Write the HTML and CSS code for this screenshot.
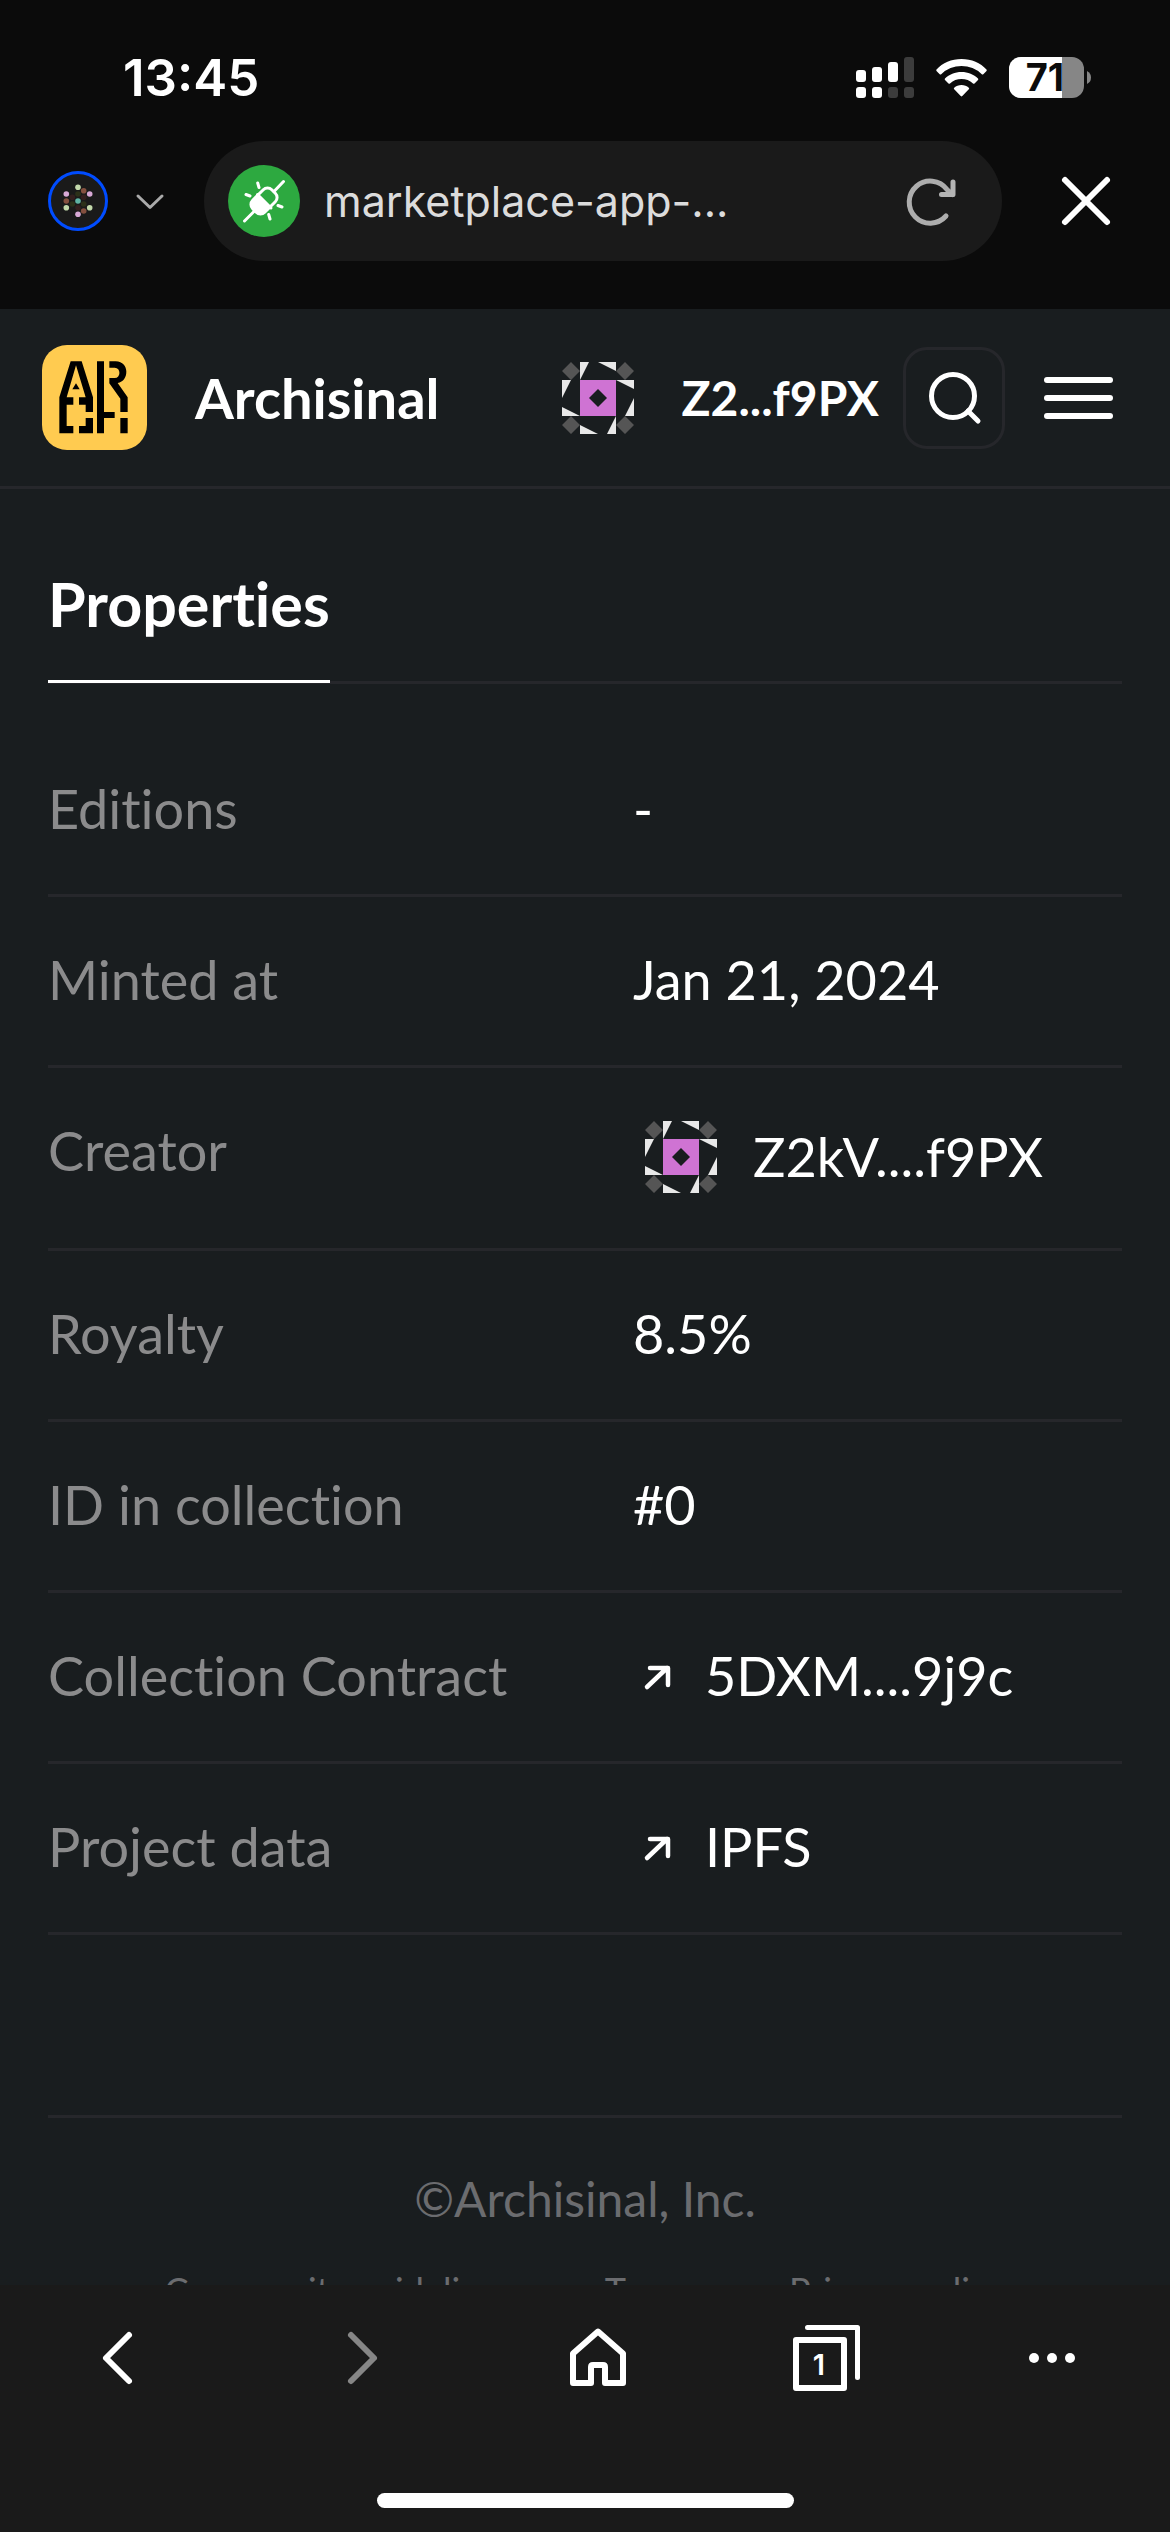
FILE: index.html
```html
<!DOCTYPE html>
<html lang="en">
<head>
<meta charset="utf-8">
<meta name="viewport" content="width=device-width, initial-scale=1">
<title>Archisinal</title>
<link rel="stylesheet" href="styles.css">
</head>
<body>
<svg class="sprite" aria-hidden="true">
  <symbol id="identicon" viewBox="0 0 72 72">
    <path fill="#cf73d3" d="M18 18H54V54H18Z"/>
    <path fill="#191d1f" d="M36 27L45 36L36 45L27 36Z"/>
    <path fill="#e8e8e8" d="M18 0H27L18 18ZM36 0H54V9ZM54 18H72V27ZM72 36V54H63ZM54 54V72H45ZM18 63V72H36ZM0 18H9L0 36ZM0 45V54H18Z"/>
    <path fill="#555" d="M9 0L18 9L9 18L0 9ZM63 0L72 9L63 18L54 9ZM9 54L18 63L9 72L0 63ZM63 54L72 63L63 72L54 63Z"/>
  </symbol>
  <symbol id="arrow" viewBox="0 0 48 48">
    <path d="M14 35L34 16M17 16H35V33" fill="none" stroke="#fff" stroke-width="4.500" stroke-linecap="round" stroke-linejoin="round"/>
  </symbol>
</svg>

<div class="chrome">
  <div class="status">
    <span class="time">13:45</span>
    <div class="indicators">
      <svg width="58" height="42" viewBox="0 0 58 42" aria-hidden="true">
        <g fill="#fff"><rect y="13" width="10" height="12" rx="3"/><rect x="16" y="10" width="10" height="15" rx="3"/><rect x="32" y="5" width="10" height="20" rx="3"/><rect y="30" width="10" height="11" rx="3"/><rect x="16" y="30" width="10" height="11" rx="3"/></g>
        <g fill="#3c3c3c"><rect x="48" width="10" height="25" rx="3"/><rect x="32" y="30" width="10" height="11" rx="3"/><rect x="48" y="30" width="10" height="11" rx="3"/></g>
      </svg>
      <svg width="51" height="42" viewBox="0 0 51 42" aria-hidden="true">
        <path fill="#fff" d="M25.500 2C35.500 2 44.500 6 50.500 12.500Q51 13.300 50.500 14L47.300 17.200Q46.500 17.800 45.800 17.200A29 29 0 0 0 5.200 17.200Q4.500 17.800 3.700 17.200L.5 14Q0 13.300 .5 12.500C6.500 6 15.500 2 25.500 2ZM25.500 15C32 15 37.800 17.500 42 21.500Q42.600 22.300 42 23L38.500 26.500Q37.700 27 37 26.500A17 17 0 0 0 14 26.500Q13.300 27 12.500 26.500L9 23Q8.400 22.300 9 21.500C13.200 17.500 19 15 25.500 15ZM25.500 28C28.300 28 30.900 29 32.800 30.700Q33.500 31.500 32.800 32.300L26.300 39Q25.500 39.800 24.700 39L18.200 32.300Q17.500 31.500 18.200 30.700C20.100 29 22.700 28 25.500 28Z"/>
      </svg>
      <svg width="82" height="42" viewBox="0 0 82 42" role="img" aria-label="Battery 71 percent">
        <rect width="75" height="41" rx="12" fill="#868686"/>
        <path fill="#fff" d="M12 0H53V41H12A12 12 0 0 1 0 29V12A12 12 0 0 1 12 0Z"/>
        <path fill="#868686" d="M78 14Q82 16 82 20.500T78 27Z"/>
        <text class="level" x="36" y="34" text-anchor="middle">71</text>
      </svg>
    </div>
  </div>

  <div class="browser">
    <button class="wallet" aria-label="Account">
      <svg width="60" height="60" viewBox="0 0 60 60">
        <circle cx="30" cy="30" r="28.500" fill="#1a1a1a" stroke="#004cff" stroke-width="3"/>
        <g fill="#c3d9ab"><circle cx="30" cy="16.300" r="2.800"/><circle cx="18.300" cy="36.700" r="2.800"/><circle cx="41.700" cy="36.700" r="2.800"/></g>
        <g fill="#84503f"><circle cx="35.700" cy="19.700" r="2.800"/><circle cx="18.300" cy="30" r="2.800"/><circle cx="35.700" cy="40" r="2.800"/></g>
        <g fill="#d8a9d6"><circle cx="41.700" cy="23" r="2.800"/><circle cx="18.300" cy="23" r="2.800"/><circle cx="30" cy="43.300" r="2.800"/></g>
        <g fill="#341f1e"><circle cx="24.300" cy="26.300" r="2.800"/><circle cx="35.700" cy="26.300" r="2.800"/><circle cx="30" cy="36.700" r="2.800"/></g>
        <g fill="#2c3019"><circle cx="30" cy="23" r="2.800"/><circle cx="24.300" cy="33" r="2.800"/><circle cx="35.700" cy="33" r="2.800"/></g>
        <circle cx="30" cy="30" r="2.800" fill="#5fb3a3"/>
      </svg>
      <svg width="36" height="36" viewBox="0 0 36 36">
        <path d="M6 13L18 24.500L30 13" fill="none" stroke="#aaa" stroke-width="3" stroke-linecap="round" stroke-linejoin="round"/>
      </svg>
    </button>
    <div class="address">
      <svg width="72" height="72" viewBox="0 0 72 72" aria-hidden="true">
        <circle cx="36" cy="36" r="36" fill="#2da940"/>
        <g fill="none" stroke="#fff" stroke-width="3" stroke-linecap="round">
          <path d="M55.500 16.500L46 26.500M16.500 56L27 45.500"/>
          <path d="M29.700 18L31 22.500M18 29.500L22 31M50 40.500L54 42M40.700 49.500L42 54"/>
          <path d="M29.500 29.500L43 43"/>
          <rect x="27.500" y="22.500" width="17" height="27" rx="6" transform="rotate(45 36 36)"/>
        </g>
        <path d="M27.500 36H44.500V43.500A6 6 0 0 1 38.500 49.500H33.500A6 6 0 0 1 27.500 43.500Z" fill="#fff" transform="rotate(45 36 36)"/>
      </svg>
      <input class="url" type="text" aria-label="Address" value="marketplace-app-...">
      <button class="reload" aria-label="Reload">
        <svg width="60" height="60" viewBox="0 0 60 60">
          <path d="M44 45A21 21 0 1 1 45 18.500L50.500 23.500" fill="none" stroke="#adadad" stroke-width="5" stroke-linecap="round"/>
          <path d="M39.500 23.500H51V11" fill="none" stroke="#b4b4b4" stroke-width="5" stroke-linecap="round" stroke-linejoin="round"/>
        </svg>
      </button>
    </div>
    <button class="close" aria-label="Close">
      <svg width="72" height="72" viewBox="0 0 72 72">
        <path d="M15 15L57 57M57 15L15 57" stroke="#fff" stroke-width="6" stroke-linecap="round"/>
      </svg>
    </button>
  </div>
</div>

<header class="site-header">
  <a class="brand" href="#">
    <svg width="105" height="105" viewBox="36 45 315 315" aria-hidden="true">
      <rect x="36" y="45" width="315" height="315" rx="75" fill="#ffcb50"/>
      <path d="M88 202L122 94H155L189 202H167L138 106L110 202ZM127 178L138 160L149 178ZM88 202H110V310H88ZM110 202H130V224H110ZM147 202H189V246H167V224H147ZM110 288H130V310H110ZM167 264H189V310H147V288H167ZM201 94H222V246H254V264H222V310H201ZM271 264H293V310H271ZM238 94H257C300 94 298 155 263 159L293 202V246H271V206L238 160V144H254C273 144 273 113 254 113H238Z"/>
    </svg>
    <span>Archisinal</span>
  </a>
  <a class="account" href="#">
    <svg width="72" height="72" aria-hidden="true"><use href="#identicon"/></svg>
    <span>Z2...f9PX</span>
  </a>
  <button class="search" aria-label="Search">
    <svg width="60" height="60" viewBox="0 0 60 60">
      <circle cx="29" cy="28" r="21.500" fill="none" stroke="#fff" stroke-width="5"/>
      <path d="M44 43L54 53" stroke="#fff" stroke-width="5" stroke-linecap="round"/>
    </svg>
  </button>
  <button class="menu" aria-label="Menu">
    <span></span><span></span><span></span>
  </button>
</header>

<main class="page">
  <div class="tabs">
    <h2 class="tab">Properties</h2>
  </div>
  <table class="properties">
    <tbody>
      <tr><th scope="row">Editions</th><td>-</td></tr>
      <tr><th scope="row">Minted at</th><td>Jan 21, 2024</td></tr>
      <tr><th scope="row">Creator</th><td><a class="creator" href="#"><svg width="72" height="72" aria-hidden="true"><use href="#identicon"/></svg>Z2kV....f9PX</a></td></tr>
      <tr><th scope="row">Royalty</th><td>8.5%</td></tr>
      <tr><th scope="row">ID in collection</th><td>#0</td></tr>
      <tr><th scope="row">Collection Contract</th><td><a class="external" href="#"><svg width="48" height="48" aria-hidden="true"><use href="#arrow"/></svg>5DXM....9j9c</a></td></tr>
      <tr><th scope="row">Project data</th><td><a class="external" href="#"><svg width="48" height="48" aria-hidden="true"><use href="#arrow"/></svg>IPFS</a></td></tr>
    </tbody>
  </table>
  <footer class="footer">
    <p>©Archisinal, Inc.</p>
    <div class="links">
      <a href="#">Community guidelines</a>
      <a href="#">Terms</a>
      <a href="#">Privacy policy</a>
    </div>
  </footer>
</main>

<nav class="toolbar" aria-label="Browser">
  <div class="tools">
    <button aria-label="Back"><svg width="96" height="96" viewBox="0 0 96 96"><path d="M59 25L36 48L59 71" fill="none" stroke="#fff" stroke-width="6" stroke-linecap="round" stroke-linejoin="round"/></svg></button>
    <button aria-label="Forward"><svg width="96" height="96" viewBox="0 0 96 96"><path d="M47 25L70 48L47 71" fill="none" stroke="#868686" stroke-width="6" stroke-linecap="round" stroke-linejoin="round"/></svg></button>
    <button aria-label="Home"><svg width="96" height="96" viewBox="0 0 96 96"><path d="M61 21.500L36 43.500V73H54V57Q54 55 56 55H66Q68 55 68 57V73H86V43.500Z" fill="none" stroke="#fff" stroke-width="6" stroke-linejoin="round"/></svg></button>
    <button aria-label="Tabs"><svg width="96" height="96" viewBox="0 0 96 96"><g fill="none" stroke="#fff" stroke-linejoin="round"><rect x="25" y="30" width="48" height="48" stroke-width="6"/><path d="M36.500 17.500H86.500V67.500" stroke-width="5" stroke-linecap="round"/></g><text class="tab-count" x="48" y="65" text-anchor="middle">1</text></svg></button>
    <button aria-label="More"><svg width="96" height="96" viewBox="0 0 96 96" fill="#fff"><circle cx="30" cy="48" r="5"/><circle cx="48" cy="48" r="5"/><circle cx="66" cy="48" r="5"/></svg></button>
  </div>
  <div class="home-bar"></div>
</nav>
</body>
</html>
```
FILE: styles.css
```css
* {
  box-sizing: border-box;
}

body {
  margin: 0;
  height: 100vh;
  display: flex;
  flex-direction: column;
  background: #191d1f;
  color: #fff;
  font-family: Lato, "Open Sans", sans-serif;
  font-variant-ligatures: none;
}

.sprite {
  display: none;
}

svg {
  display: block;
  flex: none;
}

button {
  padding: 0;
  border: 0;
  background: none;
  color: inherit;
  font: inherit;
}

a {
  color: inherit;
  text-decoration: none;
}

/* Phone status and browser bar */
.chrome {
  background: #0b0b0b;
  padding-bottom: 48px;
}

.status {
  display: flex;
  align-items: center;
  justify-content: space-between;
  padding: 51px 79px 36px 123px;
}

.time {
  font: 600 51px/54px Inter, sans-serif;
}

.indicators {
  display: flex;
  gap: 22px;
}

.level {
  font: 700 38px Inter, sans-serif;
  fill: #0b0b0b;
}

.browser {
  display: flex;
  align-items: center;
  gap: 36px;
  padding: 0 48px;
}

.wallet {
  display: flex;
  align-items: center;
  gap: 24px;
}

.address {
  flex: 1;
  min-width: 0;
  display: flex;
  align-items: center;
  gap: 24px;
  padding: 24px 40px 24px 24px;
  border-radius: 60px;
  background: #1a1a1a;
}

.url {
  flex: 1;
  min-width: 0;
  padding: 0;
  border: 0;
  outline: 0;
  background: none;
  color: #dcdcdc;
  font: 400 43px/60px Inter, sans-serif;
}

.close {
  margin-left: 12px;
}

/* Site header */
.site-header {
  display: flex;
  align-items: center;
  padding: 36px 57px 36px 42px;
  border-bottom: 3px solid #26272b;
}

.brand {
  display: flex;
  align-items: center;
  gap: 48px;
  font-size: 56px;
  font-weight: 700;
}

.account {
  display: flex;
  align-items: center;
  gap: 48px;
  margin-left: auto;
  font-size: 48px;
  font-weight: 700;
}

.search {
  display: grid;
  place-items: center;
  width: 102px;
  height: 102px;
  margin: 0 39px 0 24px;
  border: 3px solid #26272b;
  border-radius: 24px;
}

.menu {
  display: grid;
  gap: 12px;
  width: 69px;
}

.menu span {
  height: 6px;
  border-radius: 3px;
  background: #fff;
}

/* Page content */
.page {
  flex: 1;
  min-height: 0;
  overflow-y: auto;
  scrollbar-width: none;
  padding: 72px 48px 0;
}

.tabs {
  display: flex;
  border-bottom: 3px solid #26272b;
}

.tab {
  margin: 0 0 -2px;
  padding: 3px 0 36px;
  border-bottom: 3px solid #fff;
  font-size: 61px;
  line-height: 80px;
}

.properties {
  width: 100%;
  margin-top: 42px;
  border-collapse: separate;
  border-spacing: 0;
  table-layout: fixed;
  font-size: 54px;
  line-height: 81px;
}

.properties th,
.properties td {
  padding: 42px 0 45px;
  border-bottom: 3px solid #26272b;
  font-weight: 400;
  text-align: left;
  vertical-align: top;
}

.properties th {
  color: #8b8b8c;
}

.properties td {
  padding-left: 48px;
}

.creator {
  display: flex;
  align-items: center;
  gap: 36px;
  padding: 6px 0 6px 12px;
}

.external {
  display: flex;
  align-items: center;
  gap: 24px;
}

.footer {
  margin-top: 180px;
  padding: 48px 0;
  border-top: 3px solid #26272b;
  color: #6b6c6f;
  text-align: center;
}

.footer p {
  margin: 0 0 36px;
  font-size: 48px;
  line-height: 66px;
}

.links {
  display: flex;
  justify-content: center;
  gap: 90px;
  font-size: 36px;
  line-height: 44px;
}

/* Browser toolbar */
.toolbar {
  padding: 25px 70px 24px;
  background: #1a1a1a;
}

.tools {
  display: flex;
  justify-content: space-between;
}

.home-bar {
  width: 417px;
  height: 15px;
  margin: 87px auto 0;
  border-radius: 8px;
  background: #fff;
}

.tab-count {
  font: 600 29px Inter, sans-serif;
  fill: #fff;
}
```
